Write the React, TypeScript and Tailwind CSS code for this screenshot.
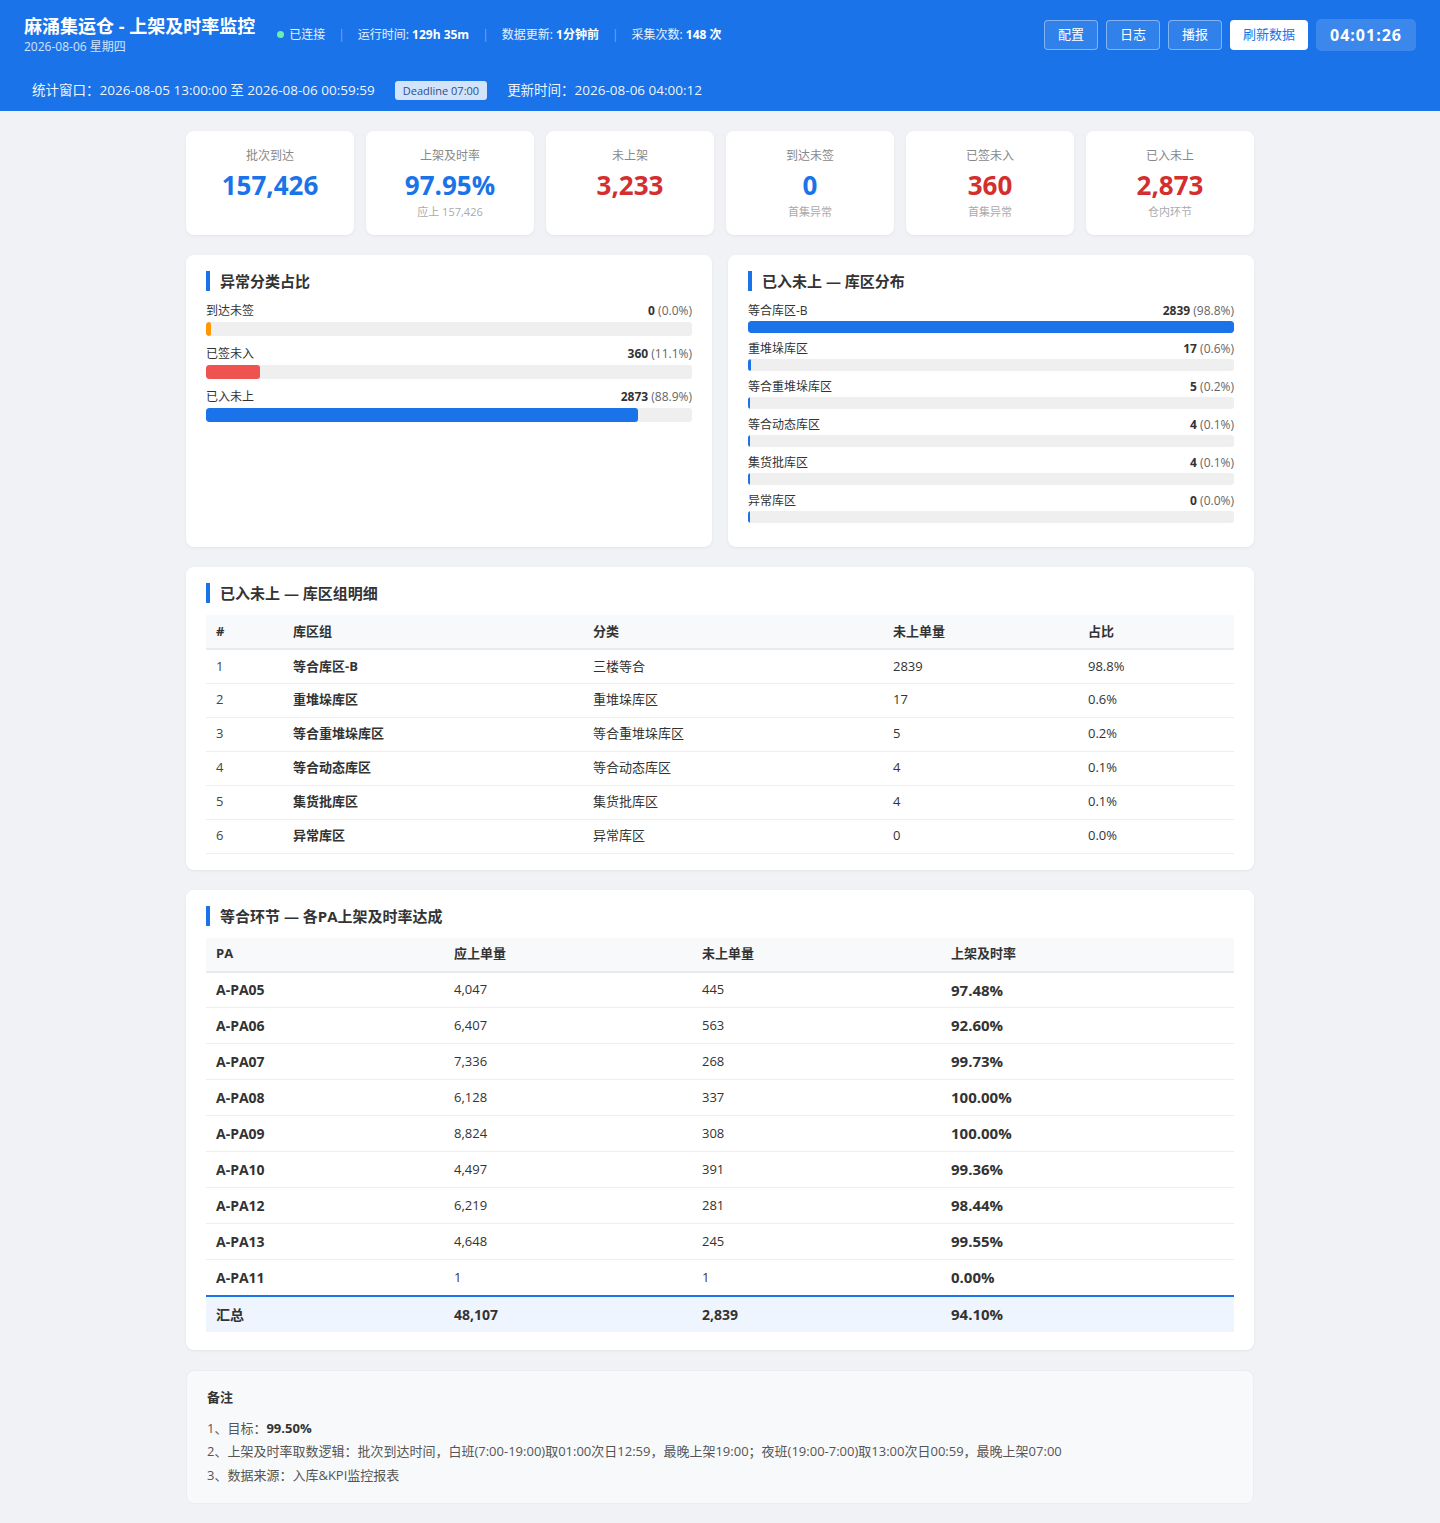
import React from "react";

const FONT = { fontFamily: '"Open Sans", "Noto Sans CJK SC", sans-serif' };

const kpis = [
  { label: "批次到达", value: "157,426", color: "text-[#1a73e8]", sub: "" },
  { label: "上架及时率", value: "97.95%", color: "text-[#1a73e8]", sub: "应上 157,426" },
  { label: "未上架", value: "3,233", color: "text-[#d32f2f]", sub: "" },
  { label: "到达未签", value: "0", color: "text-[#1a73e8]", sub: "首集异常" },
  { label: "已签未入", value: "360", color: "text-[#d32f2f]", sub: "首集异常" },
  { label: "已入未上", value: "2,873", color: "text-[#d32f2f]", sub: "仓内环节" },
];

const anomalies = [
  { label: "到达未签", n: "0", pct: 0, pctText: "0.0%", color: "bg-[#ff9800]" },
  { label: "已签未入", n: "360", pct: 11.1, pctText: "11.1%", color: "bg-[#ef5350]" },
  { label: "已入未上", n: "2873", pct: 88.9, pctText: "88.9%", color: "bg-[#1a73e8]" },
];

const zones = [
  { label: "等合库区-B", n: 2839, pct: 98.8 },
  { label: "重堆垛库区", n: 17, pct: 0.6 },
  { label: "等合重堆垛库区", n: 5, pct: 0.2 },
  { label: "等合动态库区", n: 4, pct: 0.1 },
  { label: "集货批库区", n: 4, pct: 0.1 },
  { label: "异常库区", n: 0, pct: 0.0 },
];

const zoneRows = [
  ["1", "等合库区-B", "三楼等合", "2839", "98.8%"],
  ["2", "重堆垛库区", "重堆垛库区", "17", "0.6%"],
  ["3", "等合重堆垛库区", "等合重堆垛库区", "5", "0.2%"],
  ["4", "等合动态库区", "等合动态库区", "4", "0.1%"],
  ["5", "集货批库区", "集货批库区", "4", "0.1%"],
  ["6", "异常库区", "异常库区", "0", "0.0%"],
];

const paRows = [
  ["A-PA05", "4,047", "445", "97.48%"],
  ["A-PA06", "6,407", "563", "92.60%"],
  ["A-PA07", "7,336", "268", "99.73%"],
  ["A-PA08", "6,128", "337", "100.00%"],
  ["A-PA09", "8,824", "308", "100.00%"],
  ["A-PA10", "4,497", "391", "99.36%"],
  ["A-PA12", "6,219", "281", "98.44%"],
  ["A-PA13", "4,648", "245", "99.55%"],
  ["A-PA11", "1", "1", "0.00%"],
];

function PanelTitle({ children }: { children: React.ReactNode }) {
  return (
    <div className="border-l-4 border-[#1a73e8] pl-[10px] text-[15px] leading-[20px] font-bold text-[#333] mb-3">
      {children}
    </div>
  );
}

function Sep() {
  return <span className="mx-[13px] text-white/40">|</span>;
}

const maxZone = 2839;

export default function App() {
  return (
    <div style={FONT} className="min-h-[1523px] bg-[#f0f2f5] text-[#333]">
      {/* Header */}
      <header className="bg-[#1a73e8] text-white">
        <div className="flex items-center justify-between pl-6 pr-6 pt-[14px]">
          <div className="flex items-center">
            <div>
              <div className="text-[18px] leading-[24px] font-bold">麻涌集运仓 - 上架及时率监控</div>
              <div className="text-[12px] leading-[16px] mt-[1px] text-white/80">2026-08-06 星期四</div>
            </div>
            <div className="ml-[22px] flex items-center text-[12px] text-white/90">
              <span className="inline-block w-[7px] h-[7px] rounded-full bg-[#69f0ae] mr-[5px]"></span>
              <span>已连接</span>
              <Sep />
              <span>
                运行时间: <b className="text-white">129h 35m</b>
              </span>
              <Sep />
              <span>
                数据更新: <b className="text-white">1分钟前</b>
              </span>
              <Sep />
              <span>
                采集次数: <b className="text-white">148 次</b>
              </span>
            </div>
          </div>
          <div className="flex items-center gap-2">
            {["配置", "日志", "播报"].map((t) => (
              <button
                key={t}
                className="w-[54px] h-[30px] rounded-[4px] border border-white/40 bg-white/10 text-[13px] text-white"
              >
                {t}
              </button>
            ))}
            <button className="w-[78px] h-[30px] rounded-[4px] bg-white text-[13px] text-[#1a73e8]">刷新数据</button>
            <div className="w-[100px] h-[32px] rounded-[5px] bg-white/15 flex items-center justify-center text-[16px] font-bold tracking-[1px]">
              04:01:26
            </div>
          </div>
        </div>
        <div className="flex items-center px-8 mt-[25px] pb-[11px] text-[13.5px] text-white/95">
          <div className="flex items-center h-[20px]">
            <span>统计窗口：2026-08-05 13:00:00 至 2026-08-06 00:59:59</span>
            <span className="ml-5 px-2 h-[19px] leading-[19px] rounded-[3px] bg-[#d2e3fc] text-[#2c4f86] text-[11px]">
              Deadline 07:00
            </span>
            <span className="ml-5">更新时间：2026-08-06 04:00:12</span>
          </div>
        </div>
      </header>

      <main className="w-[1068px] mx-auto pt-5 pb-[22px] flex flex-col gap-5">
        {/* KPI cards */}
        <div className="grid grid-cols-6 gap-3">
          {kpis.map((k) => (
            <div key={k.label} className="bg-white rounded-lg shadow-[0_1px_3px_rgba(0,0,0,0.06)] h-[104px] pt-[17px] text-center">
              <div className="text-[12px] leading-[16px] text-[#888]">{k.label}</div>
              <div className={`mt-[6px] text-[26px] leading-[30px] font-bold ${k.color}`}>{k.value}</div>
              {k.sub && <div className="mt-[5px] text-[11px] leading-[14px] text-[#aaa]">{k.sub}</div>}
            </div>
          ))}
        </div>

        {/* Two panels */}
        <div className="grid grid-cols-2 gap-4">
          <div className="bg-white rounded-lg shadow-[0_1px_3px_rgba(0,0,0,0.06)] px-5 pt-4 pb-6">
            <PanelTitle>异常分类占比</PanelTitle>
            {anomalies.map((a) => (
              <div key={a.label} className="mb-[10px]">
                <div className="flex justify-between text-[12px] leading-[16px]">
                  <span className="text-[#333]">{a.label}</span>
                  <span>
                    <b className="text-[#333]">{a.n}</b> <span className="text-[#666]">({a.pctText})</span>
                  </span>
                </div>
                <div className="mt-[3px] h-[14px] rounded-[3px] bg-[#efefef] overflow-hidden">
                  <div className={`h-full rounded-[3px] min-w-[5px] ${a.color}`} style={{ width: `${a.pct}%` }}></div>
                </div>
              </div>
            ))}
          </div>
          <div className="bg-white rounded-lg shadow-[0_1px_3px_rgba(0,0,0,0.06)] px-5 pt-4 pb-6">
            <PanelTitle>已入未上 — 库区分布</PanelTitle>
            {zones.map((z, i) => (
              <div key={z.label} className={i < zones.length - 1 ? "mb-2" : ""}>
                <div className="flex justify-between text-[12px] leading-[16px]">
                  <span className="text-[#333]">{z.label}</span>
                  <span>
                    <b className="text-[#333]">{z.n}</b> <span className="text-[#666]">({z.pct.toFixed(1)}%)</span>
                  </span>
                </div>
                <div className="mt-[2px] h-[12px] rounded-[3px] bg-[#efefef] overflow-hidden">
                  <div
                    className="h-full rounded-[3px] min-w-[2px] bg-[#1a73e8]"
                    style={{ width: `${(z.n / maxZone) * 100}%` }}
                  ></div>
                </div>
              </div>
            ))}
          </div>
        </div>

        {/* Table 1 */}
        <div className="bg-white rounded-lg shadow-[0_1px_3px_rgba(0,0,0,0.06)] px-5 pt-4 pb-4">
          <PanelTitle>已入未上 — 库区组明细</PanelTitle>
          <table className="w-full table-fixed border-collapse text-[13px]">
            <colgroup>
              <col className="w-[77px]" />
              <col className="w-[300px]" />
              <col className="w-[300px]" />
              <col className="w-[195px]" />
              <col />
            </colgroup>
            <thead>
              <tr className="bg-[#f8f9fa] border-b-2 border-[#e8eaed] h-[34px]">
                {["#", "库区组", "分类", "未上单量", "占比"].map((h) => (
                  <th key={h} className="text-left font-bold px-[10px] text-[#333]">
                    {h}
                  </th>
                ))}
              </tr>
            </thead>
            <tbody>
              {zoneRows.map((r) => (
                <tr key={r[0]} className="border-b border-[#eee] h-[34px]">
                  <td className="px-[10px] text-[#444]">{r[0]}</td>
                  <td className="px-[10px] font-bold text-[#333]">{r[1]}</td>
                  <td className="px-[10px] text-[#333]">{r[2]}</td>
                  <td className="px-[10px] text-[#333]">{r[3]}</td>
                  <td className="px-[10px] text-[#333]">{r[4]}</td>
                </tr>
              ))}
            </tbody>
          </table>
        </div>

        {/* Table 2 */}
        <div className="bg-white rounded-lg shadow-[0_1px_3px_rgba(0,0,0,0.06)] px-5 pt-4 pb-[18px]">
          <PanelTitle>等合环节 — 各PA上架及时率达成</PanelTitle>
          <table className="w-full table-fixed border-collapse text-[13px]">
            <colgroup>
              <col className="w-[238px]" />
              <col className="w-[248px]" />
              <col className="w-[249px]" />
              <col />
            </colgroup>
            <thead>
              <tr className="bg-[#f8f9fa] border-b-2 border-[#e8eaed] h-[34px]">
                {["PA", "应上单量", "未上单量", "上架及时率"].map((h) => (
                  <th key={h} className="text-left font-bold px-[10px] text-[#333]">
                    {h}
                  </th>
                ))}
              </tr>
            </thead>
            <tbody>
              {paRows.map((r) => (
                <tr key={r[0]} className="border-b border-[#eee] h-[36px]">
                  <td className="px-[10px] font-bold text-[14px] text-[#333]">{r[0]}</td>
                  <td className="px-[10px] text-[#333]">{r[1]}</td>
                  <td className="px-[10px] text-[#333]">{r[2]}</td>
                  <td className="px-[10px] font-bold text-[15px] text-[#333]">{r[3]}</td>
                </tr>
              ))}
              <tr className="border-t-2 border-[#1a73e8] bg-[#eef5fe] h-[36px] font-bold">
                <td className="px-[10px] text-[14px] text-[#333]">汇总</td>
                <td className="px-[10px] text-[14px] text-[#333]">48,107</td>
                <td className="px-[10px] text-[14px] text-[#333]">2,839</td>
                <td className="px-[10px] text-[15px] text-[#333]">94.10%</td>
              </tr>
            </tbody>
          </table>
        </div>

        {/* Notes */}
        <div className="bg-[#f8f9fa] rounded-lg border border-[#ebedf0] px-5 pt-[17px] pb-[16px]">
          <div className="text-[13px] leading-[18px] font-bold text-[#333] mb-[11px]">备注</div>
          <div className="text-[13px] leading-[23.5px] text-[#555]">
            <div>
              1、目标：<b className="text-[#333]">99.50%</b>
            </div>
            <div>
              2、上架及时率取数逻辑：批次到达时间，白班(7:00-19:00)取01:00次日12:59，最晚上架19:00；夜班(19:00-7:00)取13:00次日00:59，最晚上架07:00
            </div>
            <div>3、数据来源：入库&amp;KPI监控报表</div>
          </div>
        </div>
      </main>
    </div>
  );
}
